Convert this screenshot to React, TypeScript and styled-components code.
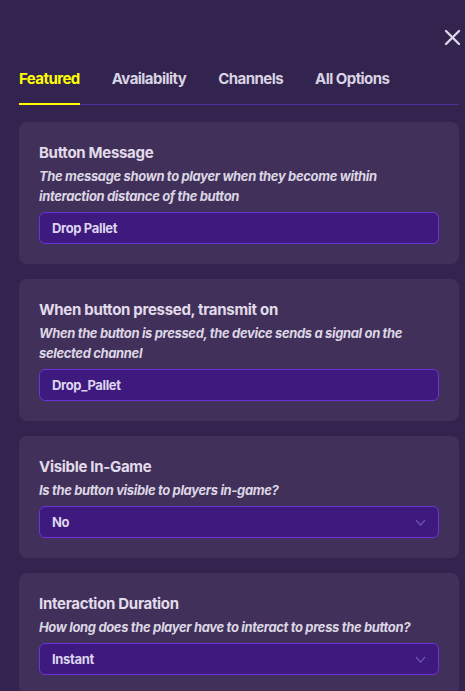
import React from 'react';
import styled, { createGlobalStyle } from 'styled-components';

const BG = '#32234f';
const CARD = '#41315a';
const FIELD = '#3e1a7e';
const FIELD_BORDER = '#6b33d9';
const TEXT = '#e2dbea';
const ACTIVE = '#ffff00';

const GlobalStyle = createGlobalStyle`
  html, body {
    margin: 0;
    padding: 0;
    background: ${BG};
    overflow: hidden;
  }
  body {
    font-family: Inter, "Noto Sans", sans-serif;
    color: ${TEXT};
  }
`;

type TabProps = {
  $active?: boolean,
};

type Option = {
  title: string,
  description: string,
  value: string,
  select?: boolean,
};

const Page = styled.div`
  height: 691px;
  padding: 0 6px 0 19px;
  box-sizing: border-box;
  overflow: hidden;
`;

const Header = styled.div`
  display: flex;
  justify-content: flex-end;
  padding-top: 28px;
  margin-right: -2px;
`;

const CloseButton = styled.button`
  display: flex;
  align-items: center;
  justify-content: center;
  width: 18px;
  height: 18px;
  padding: 0;
  border: none;
  background: none;
  color: #dcd6e6;
  cursor: pointer;
`;

const TabBar = styled.div`
  display: flex;
  gap: 32px;
  margin-top: 23px;
  border-bottom: 1px solid #4b2f9c;
`;

const Tab = styled.div<TabProps>`
  padding-bottom: 14px;
  margin-bottom: -1px;
  font-size: 15px;
  line-height: 20px;
  font-weight: 700;
  letter-spacing: -0.55px;
  color: ${(props) => (props.$active ? ACTIVE : '#d9d3e3')};
  border-bottom: 2px solid ${(props) => (props.$active ? ACTIVE : 'transparent')};
`;

const Cards = styled.div`
  display: flex;
  flex-direction: column;
  gap: 15px;
  margin-top: 17px;
`;

const Card = styled.div`
  background: ${CARD};
  border-radius: 8px;
  padding: 20px;
`;

const Title = styled.div`
  font-size: 15px;
  line-height: 22px;
  font-weight: 700;
  letter-spacing: -0.3px;
`;

const Description = styled.div`
  margin-top: 2px;
  font-size: 13px;
  line-height: 20px;
  font-weight: 700;
  font-style: italic;
  letter-spacing: -0.35px;
  color: #dcd6e4;
`;

const Field = styled.div`
  display: flex;
  align-items: center;
  justify-content: space-between;
  height: 32px;
  margin-top: 6px;
  padding: 0 12px;
  box-sizing: border-box;
  background: ${FIELD};
  border: 1px solid ${FIELD_BORDER};
  border-radius: 6px;
  font-size: 13px;
  font-weight: 700;
  letter-spacing: -0.35px;
  color: #ddd5ee;
`;

const Chevron = styled.svg`
  width: 11px;
  height: 7px;
  color: #7152b3;
`;

const options: Option[] = [
  {
    title: 'Button Message',
    description: 'The message shown to player when they become within interaction distance of the button',
    value: 'Drop Pallet',
  },
  {
    title: 'When button pressed, transmit on',
    description: 'When the button is pressed, the device sends a signal on the selected channel',
    value: 'Drop_Pallet',
  },
  {
    title: 'Visible In-Game',
    description: 'Is the button visible to players in-game?',
    value: 'No',
    select: true,
  },
  {
    title: 'Interaction Duration',
    description: 'How long does the player have to interact to press the button?',
    value: 'Instant',
    select: true,
  },
];

const tabs = ['Featured', 'Availability', 'Channels', 'All Options'];

const App = () => {
  return (
    <Page>
      <GlobalStyle />
      <Header>
        <CloseButton aria-label="Close">
          <svg width="17" height="17" viewBox="0 0 17 17">
            <path d="M2 2 L15 15 M15 2 L2 15" stroke="currentColor" strokeWidth="2.4" strokeLinecap="round" />
          </svg>
        </CloseButton>
      </Header>
      <TabBar>
        {tabs.map((tab, i) => (
          <Tab key={tab} $active={i === 0}>{tab}</Tab>
        ))}
      </TabBar>
      <Cards>
        {options.map((opt) => (
          <Card key={opt.title}>
            <Title>{opt.title}</Title>
            <Description>{opt.description}</Description>
            <Field>
              <span>{opt.value}</span>
              {opt.select && (
                <Chevron viewBox="0 0 11 7">
                  <path d="M1 1 L5.5 6 L10 1" fill="none" stroke="currentColor" strokeWidth="1.2" />
                </Chevron>
              )}
            </Field>
          </Card>
        ))}
      </Cards>
    </Page>
  );
};

export default App;
